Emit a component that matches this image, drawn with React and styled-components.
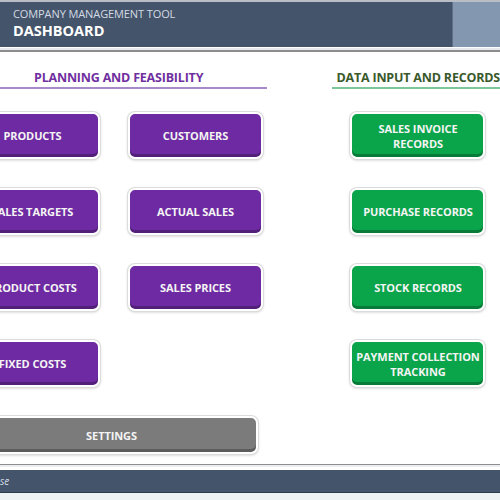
import styled, { createGlobalStyle } from 'styled-components';

const GlobalStyle = createGlobalStyle`
  html, body {
    margin: 0;
    padding: 0;
    background: #ffffff;
  }
  body {
    font-family: 'Open Sans', 'Liberation Sans', sans-serif;
  }
`;

const purpleButtons = [
  ['PRODUCTS', 'CUSTOMERS'],
  ['SALES TARGETS', 'ACTUAL SALES'],
  ['PRODUCT COSTS', 'SALES PRICES'],
  ['FIXED COSTS'],
];

const greenButtons = [
  'SALES INVOICE\nRECORDS',
  'PURCHASE RECORDS',
  'STOCK RECORDS',
  'PAYMENT COLLECTION\nTRACKING',
];

export default function App() {
  return (
    <Page>
      <GlobalStyle />
      <Header>
        <TitleBlock>
          <Subtitle>COMPANY MANAGEMENT TOOL</Subtitle>
          <Title>DASHBOARD</Title>
        </TitleBlock>
        <SideBlock />
      </Header>
      <Divider />
      <Main>
        <LeftSection>
          <SectionHead $color="#7030a0" $line="#a788c9">
            PLANNING AND FEASIBILITY
          </SectionHead>
          <ButtonGrid>
            {purpleButtons.flat().map(label => (
              <ActionButton key={label} $bg="#6e2aa2">
                {label}
              </ActionButton>
            ))}
            <SettingsButton>SETTINGS</SettingsButton>
          </ButtonGrid>
        </LeftSection>
        <RightSection>
          <SectionHead $color="#3a5a2c" $line="#7cc79a" $pad="4px">
            DATA INPUT AND RECORDS
          </SectionHead>
          <ButtonColumn>
            {greenButtons.map(label => (
              <ActionButton key={label} $bg="#0aa54a">
                {label}
              </ActionButton>
            ))}
          </ButtonColumn>
        </RightSection>
      </Main>
      <FooterRule />
      <Footer>se</Footer>
      <FooterBase />
    </Page>
  );
}

const Page = styled.div`
  width: 500px;
  height: 500px;
  overflow: hidden;
  display: flex;
  flex-direction: column;
  background: #ffffff;
`;

const Header = styled.div`
  display: flex;
  height: 45px;
  border-top: 2px solid #b9bec6;
  background: #44546a;
`;

const TitleBlock = styled.div`
  flex: 1;
  display: flex;
  flex-direction: column;
  padding: 5px 0 0 13px;
`;

const Subtitle = styled.div`
  font-size: 11px;
  color: #d5dbe4;
  letter-spacing: -0.1px;
  line-height: 14px;
`;

const Title = styled.div`
  font-size: 14.5px;
  font-weight: 700;
  color: #ffffff;
  line-height: 20px;
`;

const SideBlock = styled.div`
  width: 47px;
  background: #8497b0;
  border-left: 1px solid #5d6f87;
`;

const Divider = styled.div`
  height: 2px;
  background: #e6e8ec;
  border-bottom: 2px solid #8c8c8c;
  margin-top: 1px;
`;

const Main = styled.div`
  display: flex;
  height: 411px;
`;

const LeftSection = styled.div`
  width: 304px;
  margin-left: -35px;
  display: flex;
  flex-direction: column;
`;

const RightSection = styled.div`
  margin-left: 65px;
  flex: 1;
  display: flex;
  flex-direction: column;
`;

const SectionHead = styled.div`
  margin-top: 15px;
  padding-top: 2px;
  height: 18px;
  padding-left: ${p => p.$pad || '69px'};
  font-size: 12.5px;
  font-weight: 700;
  color: ${p => p.$color};
  border-bottom: 2px solid ${p => p.$line};
  white-space: nowrap;
  letter-spacing: -0.2px;
`;

const ButtonGrid = styled.div`
  display: grid;
  grid-template-columns: 135px 135px;
  column-gap: 28px;
  row-gap: 29px;
  margin-top: 23px;
`;

const ButtonColumn = styled.div`
  display: flex;
  flex-direction: column;
  gap: 29px;
  margin-top: 23px;
  margin-left: 18px;
  width: 135px;
`;

const ActionButton = styled.div`
  height: 47px;
  box-sizing: border-box;
  display: flex;
  align-items: center;
  justify-content: center;
  text-align: center;
  white-space: pre-line;
  background: ${p => p.$bg};
  color: #f4f4f4;
  font-size: 11px;
  font-weight: 700;
  line-height: 15px;
  letter-spacing: -0.1px;
  border: 2px solid #ffffff;
  border-radius: 7px;
  box-shadow: 0 0 0 1px #dcdcdc, 0 1px 3px rgba(0, 0, 0, 0.25),
    inset 0 -3px 0 rgba(0, 0, 0, 0.25);
`;

const SettingsButton = styled(ActionButton)`
  grid-column: 1 / span 2;
  height: 38px;
  margin-right: 5px;
  background: #7b7b7b;
`;

const FooterRule = styled.div`
  height: 1px;
  margin-top: 1px;
  background: #8c8c8c;
  border-bottom: 2px solid #eceef1;
`;

const Footer = styled.div`
  height: 22px;
  margin-top: 3px;
  background: #44546a;
  border-bottom: 1px solid #2e3b4d;
  color: #d5dbe4;
  font-size: 10px;
  font-style: italic;
  line-height: 22px;
`;

const FooterBase = styled.div`
  flex: 1;
  background: #eef1f4;
`;
